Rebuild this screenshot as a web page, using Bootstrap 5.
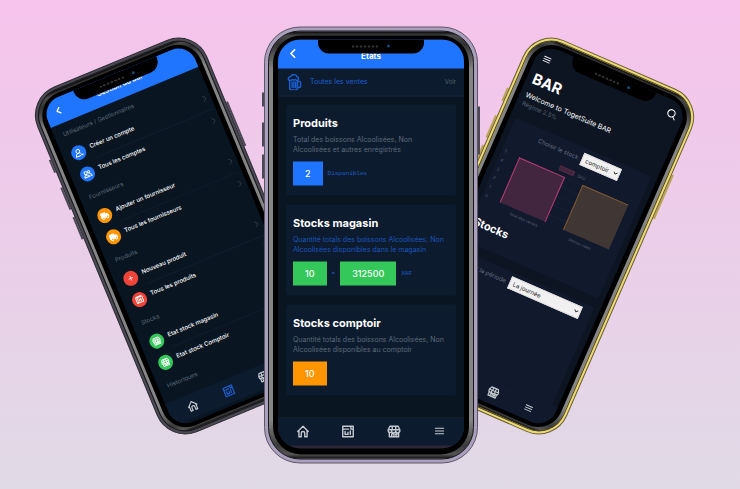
<!DOCTYPE html>
<html lang="fr">
<head>
<meta charset="utf-8">
<meta name="viewport" content="width=device-width, initial-scale=1">
<title>TogetSuite BAR</title>
<link href="https://cdn.jsdelivr.net/npm/bootstrap@5.3.0/dist/css/bootstrap.min.css" rel="stylesheet">
<style>
body{font-family:Inter,"Liberation Sans",sans-serif;background:#e9cfe7}
.stage{background:linear-gradient(#f6c3ec,#e0dae6);min-height:100vh}
svg{display:block;flex:none;fill:none;stroke:currentColor;stroke-width:2.4;stroke-linecap:round;stroke-linejoin:round}
/* phone shells */
.phone{top:50%;left:50%;width:214px;transform:translate(-50%,-50%)}
.phone-front{left:calc(50% + 1px);z-index:3}
.phone-left{width:184px;top:calc(50% - 9px);left:calc(50% - 188px);transform:translate(-50%,-50%) rotate(-22.5deg)}
.phone-right{width:184px;top:calc(50% - 9px);left:calc(50% + 175px);transform:translate(-50%,-50%) rotate(23.5deg)}
.rim{position:relative;border-radius:36px;padding:3px;border:1px solid #5a5664;background:#aaa0bd}
.band{border-radius:32px;padding:4px;border:1px solid #17171b;background:linear-gradient(#060606,#4a4a4a 1%,#303030 3%,#858585 9%,#858585 91%,#3a3a3a 97%,#555 99%,#111)}
.bezel{border-radius:28px;padding:4px 5px 6px;background:#000}
.screen{position:relative;height:409px;border-radius:22px;overflow:hidden;background:#091521;color:#fff}
.phone-left .rim,.phone-right .rim{border-radius:31px;padding:2px}
.phone-left .rim{background:#4b4a54;border-color:#2b2a31}
.phone-right .rim{background:#ecd977;border-color:#6b5f30}
.phone-left .band,.phone-right .band{border-radius:28px;padding:3px}
.phone-right .band{border-color:#4b431c}
.phone-left .bezel,.phone-right .bezel{border-radius:25px;padding:4px 5px 4px}
.phone-left .screen,.phone-right .screen{height:352px;border-radius:19px}
.phone-right .screen{background:#0d1523}
.notch{top:0;left:50%;transform:translateX(-50%);width:106px;height:14px;border-radius:0 0 11px 11px;background:#000;z-index:2;gap:9px}
.phone-left .notch,.phone-right .notch{width:90px;height:13px}
.grille{width:26px;height:2px;background:repeating-linear-gradient(90deg,#333 0 2px,#0a0a0a 2px 4px)}
.lens{width:3px;height:3px;border-radius:50%;background:#124a78}
.side-key{left:-2px;width:2px;background:#4b4855}
.key-a{top:66px;height:14px}.key-b{top:96px;height:24px}.key-c{top:128px;height:24px}
.key-d{left:auto;right:-2px;top:80px;height:48px}
.phone-right .side-key{background:#b9a550}
/* bars */
.app-head{background:#1f75fe;height:29px}
.phone-left .app-head{height:26px}
.app-title{font-size:8px;line-height:10px;font-weight:700}
.phone-left .app-title{font-size:7px;font-weight:600}
.back-link{left:10px;top:50%;transform:translateY(-50%);color:#fff}
.back-link svg{stroke-width:4}
.tabs{background:#0d1b2e;height:28px;padding:0 2px;margin-bottom:3px;color:#c5cad1}
.tabs a{flex:1;display:flex;justify-content:center;color:inherit}
.tabs a.on{color:#1b5fd0}
.phone-left .tabs,.phone-right .tabs{height:24px}
.phone-left .tabs{padding:0 0 0 6px}
.phone-right .tabs{background:#11192d;padding:0 8px 0 0;margin:0}
.under{background:#2b2536!important}
.front-body{background:#091521}
/* front screen */
.sales{background:#0d1b2e;height:28px;padding:0 8px 0 9px;border-bottom:1px solid #12243a}
.t6{font-size:6px;line-height:8px}
.t7{font-size:7px;line-height:10px}
.blue{color:#1b5fd0}.mute{color:#54616f}
.tiles{padding:8px 8px;gap:9px}
.tile{background:#0d1b2e;border-radius:3px;padding:10px 7px}
.tile h2{font-size:11px;line-height:16px;font-weight:700;margin:0 0 4px}
.tile p{font-size:7px;line-height:10px;margin:0 0 7px;color:#5c6a7a}
.tile p.blue{color:#1956bd}
.chip{font-size:9px;line-height:24px;font-weight:500;padding:0 12px;border-radius:0;color:#fff;border:0}
.chip-blue{background:#1f75fe}.chip-green{background:#34c759}.chip-orange{background:#ff9500}
.chip-row{gap:5px}
.mono{font-family:"Liberation Mono",monospace}
/* list screen */
.group{font-size:6px;line-height:22px;color:#5c6a79;padding-left:9px}
.entry{height:23px;padding:0 3px 0 9px;color:#fff;gap:5px}
.entry .dot{width:15px;height:15px;border-radius:50%;display:flex;align-items:center;justify-content:center;flex:none}
.entry .txt{flex:1;align-self:stretch;display:flex;align-items:center;justify-content:space-between;font-size:6px;line-height:8px;font-weight:500;padding-bottom:3px}
.entry.line .txt{border-bottom:1px solid #0f1f2f}
.entry .txt svg{color:#37424f}
.red{background:#f04438}
/* dashboard screen */
.dash-head{padding:8px 7px 0}
.dash h1{font-size:15px;line-height:18px;font-weight:700;margin:8px 0 4px}
.welcome{font-size:7px;line-height:10px}
.dash{padding:0 6px}
.panel{background:#11192d;border-radius:3px}
.panel-a{margin-top:12px;padding:5px 3px 9px;height:133px}
.panel-b{margin-top:10px;padding:4px 11px 0 3px;height:110px}
.pick{display:grid;color:#222}
.pick>*{grid-area:1/1}
.pick select{appearance:none;border:1px solid #ddd;border-radius:0;background:#f1f1f1;color:#222;font-size:6px;line-height:8px;height:13px;padding:0 10px 0 3px;width:100%}
.pick svg{justify-self:end;align-self:center;margin-right:2px;pointer-events:none;stroke-width:4}
.pick-a{width:41px}.pick-b{width:77px}
.lab{font-size:6px;line-height:8px;color:#657080}
.key-box{width:16px;height:5px;background:#40263d;border:1px solid #552945}
.tiny{font-size:4px;line-height:5px;color:#566071}
.axis{width:8px;height:54px;display:flex;flex-direction:column;justify-content:space-between;margin-top:-3px}
.plot{height:49px;margin-left:8px;gap:19px;background:repeating-linear-gradient(#151f33 0 1px,transparent 1px 10px)}
.bar-box{width:50px}
.bar-pink{background:#42263f;border:1px solid #b93c74;border-bottom:0}
.bar-tan{background:#403633;border:1px solid #805930;border-width:1px 0 0 1px}
.panel h3{font-size:11px;line-height:14px;font-weight:700;margin:11px 0 0 0}
</style>
<script src="https://cdn.jsdelivr.net/npm/bootstrap@5.3.0/dist/js/bootstrap.bundle.min.js"></script>
</head>
<body>
<svg width="0" height="0" class="position-absolute" aria-hidden="true">
<symbol id="home" viewBox="0 0 24 24"><path d="M3 12 12 3l9 9M5 11v10h4v-6a3 3 0 0 1 6 0v6h4V11"/></symbol>
<symbol id="report" viewBox="0 0 24 24"><path d="M3 3h18v18H3zM3 8h10M17 3v5h4M7 12v5M7 17h5M12 13v4M16 11v6"/></symbol>
<symbol id="store" viewBox="0 0 24 24"><path d="M5 3h14l3 6H2zM2 9v2a3 3 0 0 0 6 0 3 3 0 0 0 7 0 3 3 0 0 0 7 0V9M4 13v8h16v-8M8 21v-5h4v5M15 16h2v2h-2zM9 3v6M15 3v6"/></symbol>
<symbol id="menu" viewBox="0 0 24 24"><path d="M3 6h18M3 12h18M3 18h18"/></symbol>
<symbol id="back" viewBox="0 0 24 24"><path d="M16 3 7 12l9 9"/></symbol>
<symbol id="next" viewBox="0 0 24 24"><path d="m8 3 9 9-9 9"/></symbol>
<symbol id="down" viewBox="0 0 24 24"><path d="m4 8 8 8 8-8"/></symbol>
<symbol id="beer" viewBox="0 0 24 28"><path d="M4 11v13q0 3 3 3h7q3 0 3-3V11M17 13h3q2 0 2 2v6q0 2-2 2h-3M8 14v9M11 14v9M14 14v9M5 12q-4-1-3-4 1-3 4-3 2-4 6-3 3 0 4 3 4 2 2 6-1 2-3 0-2-2-4 0-3-2-6 1z"/></symbol>
<symbol id="user" viewBox="0 0 24 24"><circle cx="11" cy="8" r="5"/><path d="M2 21q1-8 9-8 4 0 6 3M2 21h12M17 20h5"/></symbol>
<symbol id="users" viewBox="0 0 24 24"><circle cx="8" cy="8" r="4"/><circle cx="17" cy="8" r="3"/><path d="M1 20q1-6 7-6t7 6zM17 14q5 0 6 6h-5"/></symbol>
<symbol id="truck" viewBox="0 0 24 24"><path fill="currentColor" d="M2 5h12v12H2zM15 9h4l3 4v4h-7z"/><circle fill="#ff9500" cx="7" cy="18" r="3"/><circle fill="#ff9500" cx="18" cy="18" r="3"/></symbol>
<symbol id="plus" viewBox="0 0 24 24"><path d="M12 5v14M5 12h14"/></symbol>
<symbol id="glass" viewBox="0 0 24 24"><path d="M3 5h18v15H3zM7 5v15M11 9v8M16 9v8M11 13h5M5 3h14"/></symbol>
<symbol id="search" viewBox="0 0 24 24"><circle cx="11" cy="11" r="8"/><path d="m17 17 5 5"/></symbol>
</svg>
<main class="stage position-relative overflow-hidden">

<section class="phone phone-left position-absolute" aria-label="Gestion du Bar">
<span class="side-key key-a position-absolute"></span><span class="side-key key-b position-absolute"></span><span class="side-key key-c position-absolute"></span><span class="side-key key-d position-absolute"></span>
<div class="rim"><div class="band"><div class="bezel"><div class="screen d-flex flex-column">
<div class="notch position-absolute d-flex justify-content-center align-items-center"><span class="grille"></span><span class="lens"></span></div>
<header class="app-head position-relative d-flex align-items-center justify-content-center"><a href="#" class="back-link position-absolute" aria-label="Retour"><svg width="8" height="8"><use href="#back"/></svg></a><span class="app-title">Gestion du Bar</span></header>
<div class="flex-grow-1 overflow-hidden">
<div class="group">Utilisateurs / Gestionnaires</div>
<a href="#" class="entry line d-flex align-items-center text-decoration-none"><span class="dot chip-blue"><svg width="9" height="9"><use href="#user"/></svg></span><span class="txt">Créer un compte<svg width="7" height="7"><use href="#next"/></svg></span></a>
<a href="#" class="entry d-flex align-items-center text-decoration-none"><span class="dot chip-blue"><svg width="9" height="9"><use href="#users"/></svg></span><span class="txt">Tous les comptes<svg width="7" height="7"><use href="#next"/></svg></span></a>
<div class="group">Fournisseurs</div>
<a href="#" class="entry line d-flex align-items-center text-decoration-none"><span class="dot chip-orange"><svg width="9" height="9"><use href="#truck"/></svg></span><span class="txt">Ajouter un fournisseur<svg width="7" height="7"><use href="#next"/></svg></span></a>
<a href="#" class="entry d-flex align-items-center text-decoration-none"><span class="dot chip-orange"><svg width="9" height="9"><use href="#truck"/></svg></span><span class="txt">Tous les fournisseurs<svg width="7" height="7"><use href="#next"/></svg></span></a>
<div class="group">Produits</div>
<a href="#" class="entry line d-flex align-items-center text-decoration-none"><span class="dot red"><svg width="7" height="7"><use href="#plus"/></svg></span><span class="txt">Nouveau produit<svg width="7" height="7"><use href="#next"/></svg></span></a>
<a href="#" class="entry d-flex align-items-center text-decoration-none"><span class="dot red"><svg width="9" height="9"><use href="#glass"/></svg></span><span class="txt">Tous les produits<svg width="7" height="7"><use href="#next"/></svg></span></a>
<div class="group">Stocks</div>
<a href="#" class="entry line d-flex align-items-center text-decoration-none"><span class="dot chip-green"><svg width="9" height="9"><use href="#store"/></svg></span><span class="txt">Etat stock magasin<svg width="7" height="7"><use href="#next"/></svg></span></a>
<a href="#" class="entry d-flex align-items-center text-decoration-none"><span class="dot chip-green"><svg width="9" height="9"><use href="#store"/></svg></span><span class="txt">Etat stock Comptoir<svg width="7" height="7"><use href="#next"/></svg></span></a>
<div class="group">Historiques</div>
</div>
<nav class="tabs d-flex align-items-center"><a href="#" aria-label="Accueil"><svg width="12" height="12"><use href="#home"/></svg></a><a href="#" class="on" aria-label="Gestion"><svg width="12" height="12"><use href="#report"/></svg></a><a href="#" aria-label="Magasin"><svg width="12" height="12"><use href="#store"/></svg></a><a href="#" aria-label="Menu"><svg width="9" height="9"><use href="#menu"/></svg></a></nav>
</div></div></div></div>
</section>

<section class="phone phone-right position-absolute" aria-label="Tableau de bord">
<span class="side-key key-a position-absolute"></span><span class="side-key key-b position-absolute"></span><span class="side-key key-c position-absolute"></span><span class="side-key key-d position-absolute"></span>
<div class="rim"><div class="band"><div class="bezel"><div class="screen d-flex flex-column">
<div class="notch position-absolute d-flex justify-content-center align-items-center"><span class="grille"></span><span class="lens"></span></div>
<header class="dash-head d-flex justify-content-between align-items-center"><a href="#" class="text-light" aria-label="Menu"><svg width="9" height="9"><use href="#menu"/></svg></a><a href="#" class="text-light" aria-label="Rechercher"><svg width="11" height="11"><use href="#search"/></svg></a></header>
<div class="dash flex-grow-1 overflow-hidden">
<h1>BAR</h1>
<div class="welcome">Welcome to TogetSuite BAR</div>
<div class="t6 mute">Régime 2.5%</div>
<div class="panel panel-a">
<div class="d-flex justify-content-center align-items-center gap-1"><label class="lab" for="stock">Choisir le stock</label><span class="pick pick-a"><select id="stock"><option>comptoir</option></select><svg width="5" height="5"><use href="#down"/></svg></span></div>
<div class="d-flex justify-content-center align-items-center gap-1 mt-2 mb-1"><span class="key-box"></span><span class="tiny">SKU</span></div>
<div class="d-flex"><div class="axis tiny"><span>5</span><span>4</span><span>3</span><span>2</span><span>1</span><span>0</span></div>
<div><div class="plot d-flex"><div class="bar-box bar-pink"></div><div class="bar-box bar-tan"></div></div>
<div class="d-flex justify-content-around tiny mt-1 ps-1"><span>Total des ventes</span><span>Stocks vides</span></div></div></div>
<h3>Stocks</h3>
</div>
<div class="panel panel-b"><div class="d-flex justify-content-end align-items-center gap-1"><label class="lab text-nowrap" for="period">Choisir la période</label><span class="pick pick-b"><select id="period"><option>La journée</option></select><svg width="5" height="5"><use href="#down"/></svg></span></div></div>
</div>
<nav class="tabs d-flex align-items-center"><a href="#" aria-label="Accueil"><svg width="12" height="12"><use href="#home"/></svg></a><a href="#" aria-label="Gestion"><svg width="12" height="12"><use href="#report"/></svg></a><a href="#" aria-label="Magasin"><svg width="12" height="12"><use href="#store"/></svg></a><a href="#" aria-label="Menu"><svg width="9" height="9"><use href="#menu"/></svg></a></nav>
</div></div></div></div>
</section>

<section class="phone phone-front position-absolute" aria-label="Etats">
<span class="side-key key-a position-absolute"></span><span class="side-key key-b position-absolute"></span><span class="side-key key-c position-absolute"></span><span class="side-key key-d position-absolute"></span>
<div class="rim"><div class="band"><div class="bezel"><div class="screen under d-flex flex-column">
<div class="notch position-absolute d-flex justify-content-center align-items-center"><span class="grille"></span><span class="lens"></span></div>
<header class="app-head position-relative d-flex align-items-center justify-content-center"><a href="#" class="back-link position-absolute" aria-label="Retour"><svg width="10" height="10"><use href="#back"/></svg></a><span class="app-title pt-1">Etats</span></header>
<div class="front-body flex-grow-1">
<div class="sales d-flex align-items-center gap-2"><svg class="blue" width="15" height="17"><use href="#beer"/></svg><a href="#" class="t7 blue text-decoration-none">Toutes les ventes</a><a href="#" class="t6 mute text-decoration-none ms-auto">Voir</a></div>
<div class="tiles d-flex flex-column">
<article class="tile"><h2>Produits</h2><p>Total des boissons Alcoolisées, Non Alcoolisées et autres enrégistrés</p><div class="chip-row d-flex align-items-center"><button class="chip chip-blue">2</button><span class="t6 mono blue">Disponibles</span></div></article>
<article class="tile"><h2>Stocks magasin</h2><p class="blue">Quantité totals des boissons Alcoolisées, Non Alcoolisées disponibles dans le magasin</p><div class="chip-row d-flex align-items-center"><button class="chip chip-green">10</button><span class="t6 mono blue">=</span><button class="chip chip-green">312500</button><span class="t6 mono blue">XAF</span></div></article>
<article class="tile"><h2>Stocks comptoir</h2><p>Quantité totals des boissons Alcoolisées, Non Alcoolisées disponibles au comptoir</p><div class="d-flex"><button class="chip chip-orange">10</button></div></article>
</div></div>
<nav class="tabs d-flex align-items-center"><a href="#" aria-label="Accueil"><svg width="14" height="14"><use href="#home"/></svg></a><a href="#" aria-label="Etats"><svg width="14" height="14"><use href="#report"/></svg></a><a href="#" aria-label="Magasin"><svg width="14" height="14"><use href="#store"/></svg></a><a href="#" aria-label="Menu"><svg width="11" height="11"><use href="#menu"/></svg></a></nav>
</div></div></div></div>
</section>
</main>
</body>
</html>
